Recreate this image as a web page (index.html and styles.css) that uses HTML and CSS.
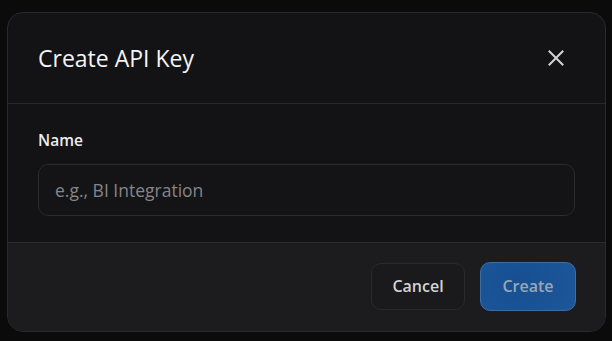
FILE: index.html
```html
<!DOCTYPE html>
<html>
<head>
<meta charset="utf-8">
<link rel="stylesheet" href="styles.css">
</head>
<body>
<div class="dialog">
  <div class="header">
    <h2 class="title">Create API Key</h2>
    <button class="close" aria-label="Close">
      <svg width="16" height="16" viewBox="0 0 16 16"><path d="M1.5 1.5L14.5 14.5M14.5 1.5L1.5 14.5" stroke="#d4d4d6" stroke-width="2" stroke-linecap="square" fill="none"/></svg>
    </button>
  </div>
  <div class="body">
    <label class="label">Name</label>
    <div class="input">e.g., BI Integration</div>
  </div>
  <div class="footer">
    <button class="btn cancel">Cancel</button>
    <button class="btn create">Create</button>
  </div>
</div>
</body>
</html>
```
FILE: styles.css
```css
html, body { margin: 0; padding: 0; }
body {
  background: #0b0b0c;
  width: 612px;
  height: 341px;
  font-family: "Open Sans", "Noto Sans", sans-serif;
  overflow: hidden;
}
.dialog {
  margin: 12px 0 0 7px;
  width: 597px;
  height: 318px;
  border: 1px solid #2a2a2d;
  border-radius: 16px;
  background: #131315;
  overflow: hidden;
  display: flex;
  flex-direction: column;
}
.header {
  height: 90px;
  border-bottom: 1px solid #29292c;
  display: flex;
  align-items: center;
  justify-content: space-between;
  padding: 0 41px 0 30px;
}
.title {
  margin: 0;
  font-size: 23px;
  font-weight: 500;
  color: #f4f4f5;
}
.close {
  background: none;
  border: none;
  padding: 0;
  width: 16px;
  height: 16px;
  display: flex;
}
.body {
  padding: 26px 30px 26px 30px;
  display: flex;
  flex-direction: column;
}
.label {
  font-size: 15.5px;
  font-weight: 600;
  line-height: 20px;
  color: #ececed;
  margin-bottom: 14px;
}
.input {
  height: 50px;
  border: 1px solid #2b2b2e;
  border-radius: 10px;
  background: #141416;
  box-sizing: content-box;
  display: flex;
  align-items: center;
  padding: 0 16px;
  font-size: 17.5px;
  color: #85858a;
}
.footer {
  flex: 1;
  background: #1c1c1e;
  border-top: 1px solid #2b2b2e;
  display: flex;
  justify-content: flex-end;
  align-items: center;
  gap: 15px;
  padding: 0 29px 2px 0;
}
.btn {
  font-family: "Open Sans", "Noto Sans", sans-serif;
  font-size: 16px;
  font-weight: 600;
  border-radius: 10px;
  padding: 0;
  height: 47px;
}
.cancel {
  width: 94px;
  background: #1a1a1c;
  border: 1px solid #2a2a2c;
  color: #d2d2d4;
}
.create {
  width: 96px;
  height: 49px;
  background: radial-gradient(circle at 40% 40%, #174f92, #1d5799);
  border: 1px solid #3c6ea6;
  color: #9aa6b6;
}
```
